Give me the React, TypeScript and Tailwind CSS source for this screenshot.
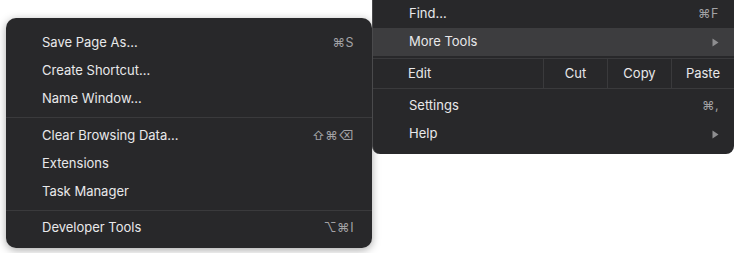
import React from "react";

const font = { fontFamily: "Inter, 'DejaVu Sans', sans-serif" };

type Row = { label: string; shortcut?: string; sub?: boolean; active?: boolean; right?: string };

const Arrow = () => (
  <svg width="7" height="9" viewBox="0 0 7 9" className="fill-[#8e8e90]">
    <path d="M0.5 0.5 L6.5 4.5 L0.5 8.5 Z" />
  </svg>
);

const MenuRow = ({ label, shortcut, sub, active, right = "pr-[18px]" }: Row) => (
  <div
    className={`flex h-[28px] items-center justify-between pl-[36px] ${right} ${
      active ? "bg-[#3d3d3f]" : ""
    }`}
  >
    <span className="text-[13px] text-[#e8e8ea]">{label}</span>
    {shortcut && <span className="text-[12.5px] tracking-[0.5px] text-[#a2a2a5]">{shortcut}</span>}
    {sub && <Arrow />}
  </div>
);

const Sep = ({ h = "h-[8px]" }: { h?: string }) => (
  <div className={`flex ${h} items-center`}>
    <div className="h-px w-full bg-[#3a3a3c]" />
  </div>
);

const LeftMenu = () => (
  <div className="z-10 flex h-[230px] w-[366px] flex-col rounded-[10px] bg-[#28282a] pt-[11px] shadow-[0_2px_8px_rgba(0,0,0,0.35)]">
    <MenuRow label="Save Page As…" shortcut="⌘S" />
    <MenuRow label="Create Shortcut…" />
    <MenuRow label="Name Window…" />
    <Sep h="h-[9px]" />
    <MenuRow label="Clear Browsing Data…" shortcut="⇧⌘⌫" />
    <MenuRow label="Extensions" />
    <MenuRow label="Task Manager" />
    <Sep />
    <MenuRow label="Developer Tools" shortcut="⌥⌘I" />
  </div>
);

const RightMenu = () => (
  <div className="flex h-[154px] w-[362px] flex-col rounded-b-[8px] border-l border-[#4a4a4c] bg-[#28282a]">
    <MenuRow label="Find…" shortcut="⌘F" right="pr-[15px]" />
    <MenuRow label="More Tools" sub active right="pr-[15px]" />
    <div className="mt-[2px] flex h-[31px] border-y border-[#3a3a3c] text-[13px] text-[#e8e8ea]">
      <div className="flex flex-1 items-center pl-[35px]">Edit</div>
      <div className="flex w-[64px] items-center justify-center border-l border-[#3a3a3c]">Cut</div>
      <div className="flex w-[64px] items-center justify-center border-l border-[#3a3a3c]">Copy</div>
      <div className="flex w-[63px] items-center justify-center border-l border-[#3a3a3c]">Paste</div>
    </div>
    <div className="h-[3px]" />
    <MenuRow label="Settings" shortcut="⌘," right="pr-[15px]" />
    <MenuRow label="Help" sub right="pr-[15px]" />
  </div>
);

export default function App() {
  return (
    <div style={font} className="flex h-[253px] w-[735px] overflow-hidden bg-white">
      <div className="pl-[6px] pt-[18px]">
        <LeftMenu />
      </div>
      <RightMenu />
    </div>
  );
}
